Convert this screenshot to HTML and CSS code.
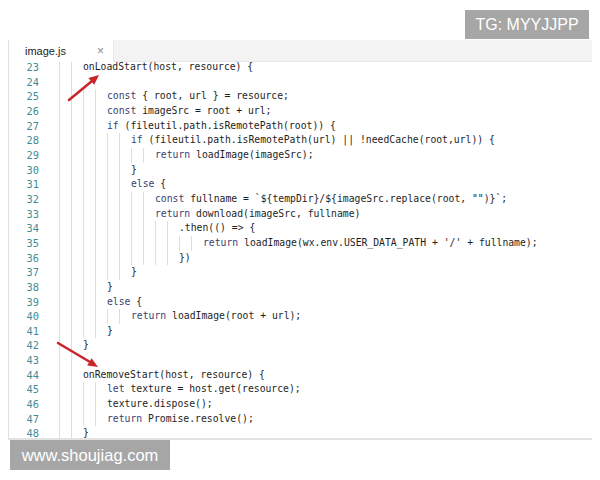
FILE: index.html
```html
<!DOCTYPE html>
<html>
<head>
<meta charset="utf-8">
<link rel="stylesheet" href="styles.css">
</head>
<body>
<div class="editor">
  <div class="tabbar">
    <div class="tab"><span class="tab-name">image.js</span><span class="tab-close">×</span></div>
  </div>
  <div class="code">
    <div class="lines">
      <div class="row"><span class="num">23</span><span class="src l0">onLoadStart(host, resource) {</span></div>
      <div class="row"><span class="num">24</span><span class="src l0"></span></div>
      <div class="row"><span class="num">25</span><span class="src l1"><span class="k">const</span> { root, url } = resource;</span></div>
      <div class="row"><span class="num">26</span><span class="src l1"><span class="k">const</span> imageSrc = root + url;</span></div>
      <div class="row"><span class="num">27</span><span class="src l1"><span class="k">if</span> (fileutil.path.isRemotePath(root)) {</span></div>
      <div class="row"><span class="num">28</span><span class="src l2"><span class="k">if</span> (fileutil.path.isRemotePath(url) || !needCache(root,url)) {</span></div>
      <div class="row"><span class="num">29</span><span class="src l3"><span class="k">return</span> loadImage(imageSrc);</span></div>
      <div class="row"><span class="num">30</span><span class="src l2">}</span></div>
      <div class="row"><span class="num">31</span><span class="src l2"><span class="k">else</span> {</span></div>
      <div class="row"><span class="num">32</span><span class="src l3"><span class="k">const</span> fullname = `${tempDir}/${imageSrc.replace(root, "")}`;</span></div>
      <div class="row"><span class="num">33</span><span class="src l3"><span class="k">return</span> download(imageSrc, fullname)</span></div>
      <div class="row"><span class="num">34</span><span class="src l4">.then(() =&gt; {</span></div>
      <div class="row"><span class="num">35</span><span class="src l5"><span class="k">return</span> loadImage(wx.env.USER_DATA_PATH + '/' + fullname);</span></div>
      <div class="row"><span class="num">36</span><span class="src l4">})</span></div>
      <div class="row"><span class="num">37</span><span class="src l2">}</span></div>
      <div class="row"><span class="num">38</span><span class="src l1">}</span></div>
      <div class="row"><span class="num">39</span><span class="src l1"><span class="k">else</span> {</span></div>
      <div class="row"><span class="num">40</span><span class="src l2"><span class="k">return</span> loadImage(root + url);</span></div>
      <div class="row"><span class="num">41</span><span class="src l1">}</span></div>
      <div class="row"><span class="num">42</span><span class="src l0">}</span></div>
      <div class="row"><span class="num">43</span><span class="src l0"></span></div>
      <div class="row"><span class="num">44</span><span class="src l0">onRemoveStart(host, resource) {</span></div>
      <div class="row"><span class="num">45</span><span class="src l1"><span class="k">let</span> texture = host.get(resource);</span></div>
      <div class="row"><span class="num">46</span><span class="src l1">texture.dispose();</span></div>
      <div class="row"><span class="num">47</span><span class="src l1"><span class="k">return</span> Promise.resolve();</span></div>
      <div class="row"><span class="num">48</span><span class="src l0">}</span></div>
    </div>
  </div>
</div>
<svg class="arrows" width="600" height="480" viewBox="0 0 600 480">
  <line x1="69" y1="100" x2="92" y2="81" stroke="#c9262c" stroke-width="2.6" stroke-linecap="round"/>
  <polygon points="99,75 94.2,84.8 88.4,78" fill="#c9262c"/>
  <line x1="58" y1="343" x2="90" y2="362" stroke="#c9262c" stroke-width="2.6" stroke-linecap="round"/>
  <polygon points="98,367 87.2,365.6 91.6,358.2" fill="#c9262c"/>
</svg>
<div class="badge badge-top">TG: MYYJJPP</div>
<div class="badge badge-bottom">www.shoujiag.com</div>
</body>
</html>
```

FILE: styles.css
```css
html, body {
  margin: 0;
  padding: 0;
  background: #ffffff;
}
body {
  width: 600px;
  height: 480px;
  padding: 40px 8px 0 8px;
  box-sizing: border-box;
  position: relative;
  overflow: hidden;
  font-family: "Liberation Sans", Arial, sans-serif;
}
.editor {
  width: 584px;
  height: 400px;
  box-sizing: border-box;
  border-left: 1px solid #e0e0e0;
  border-bottom: 2px solid #e2e2e2;
  display: flex;
  flex-direction: column;
  background: #fff;
}
.tabbar {
  height: 22px;
  flex: none;
  box-sizing: border-box;
  background: #f3f3f3;
  border-bottom: 1px solid #e6e6e6;
  display: flex;
}
.tab {
  width: 105px;
  height: 22px;
  box-sizing: border-box;
  background: #fff;
  border-right: 1px solid #e9e9e9;
  display: flex;
  align-items: center;
  padding-left: 16px;
}
.tab-name {
  font-size: 11px;
  color: #222;
  width: 72px;
}
.tab-close {
  font-size: 12px;
  color: #8a8a8a;
}
.code {
  flex: 1;
  overflow: hidden;
}
.lines {
  margin-top: -2px;
}
.row {
  display: flex;
  height: 14.67px;
  line-height: 14.67px;
  font-family: "DejaVu Sans Mono", "Liberation Mono", monospace;
  white-space: pre;
}
.num {
  width: 30px;
  margin-right: 20px;
  text-align: right;
  font-size: 10.3px;
  color: #3f8c96;
  flex: none;
}
.src {
  flex: 1;
  font-size: 9.75px;
  color: #1e1e1e;
  background-image: repeating-linear-gradient(90deg, #dedede 0 1px, transparent 1px 12px);
  background-repeat: no-repeat;
  background-position: 0 0;
}
.l0 { padding-left: 24px; background-size: 24px 100%; }
.l1 { padding-left: 48px; background-size: 48px 100%; }
.l2 { padding-left: 72px; background-size: 72px 100%; }
.l3 { padding-left: 96px; background-size: 96px 100%; }
.l4 { padding-left: 120px; background-size: 120px 100%; }
.l5 { padding-left: 144px; background-size: 144px 100%; }
.k {
  color: #393f74;
}
.arrows {
  position: absolute;
  left: 0;
  top: 0;
  pointer-events: none;
}
.badge {
  position: absolute;
  background: #a6a6a6;
  color: #fff;
  font-family: "Liberation Sans", Arial, sans-serif;
  display: flex;
  align-items: center;
  justify-content: center;
}
.badge-top {
  left: 465px;
  top: 10px;
  width: 124px;
  height: 29px;
  font-size: 16px;
}
.badge-bottom {
  left: 10px;
  top: 440px;
  width: 160px;
  height: 30px;
  font-size: 16.5px;
}
```
